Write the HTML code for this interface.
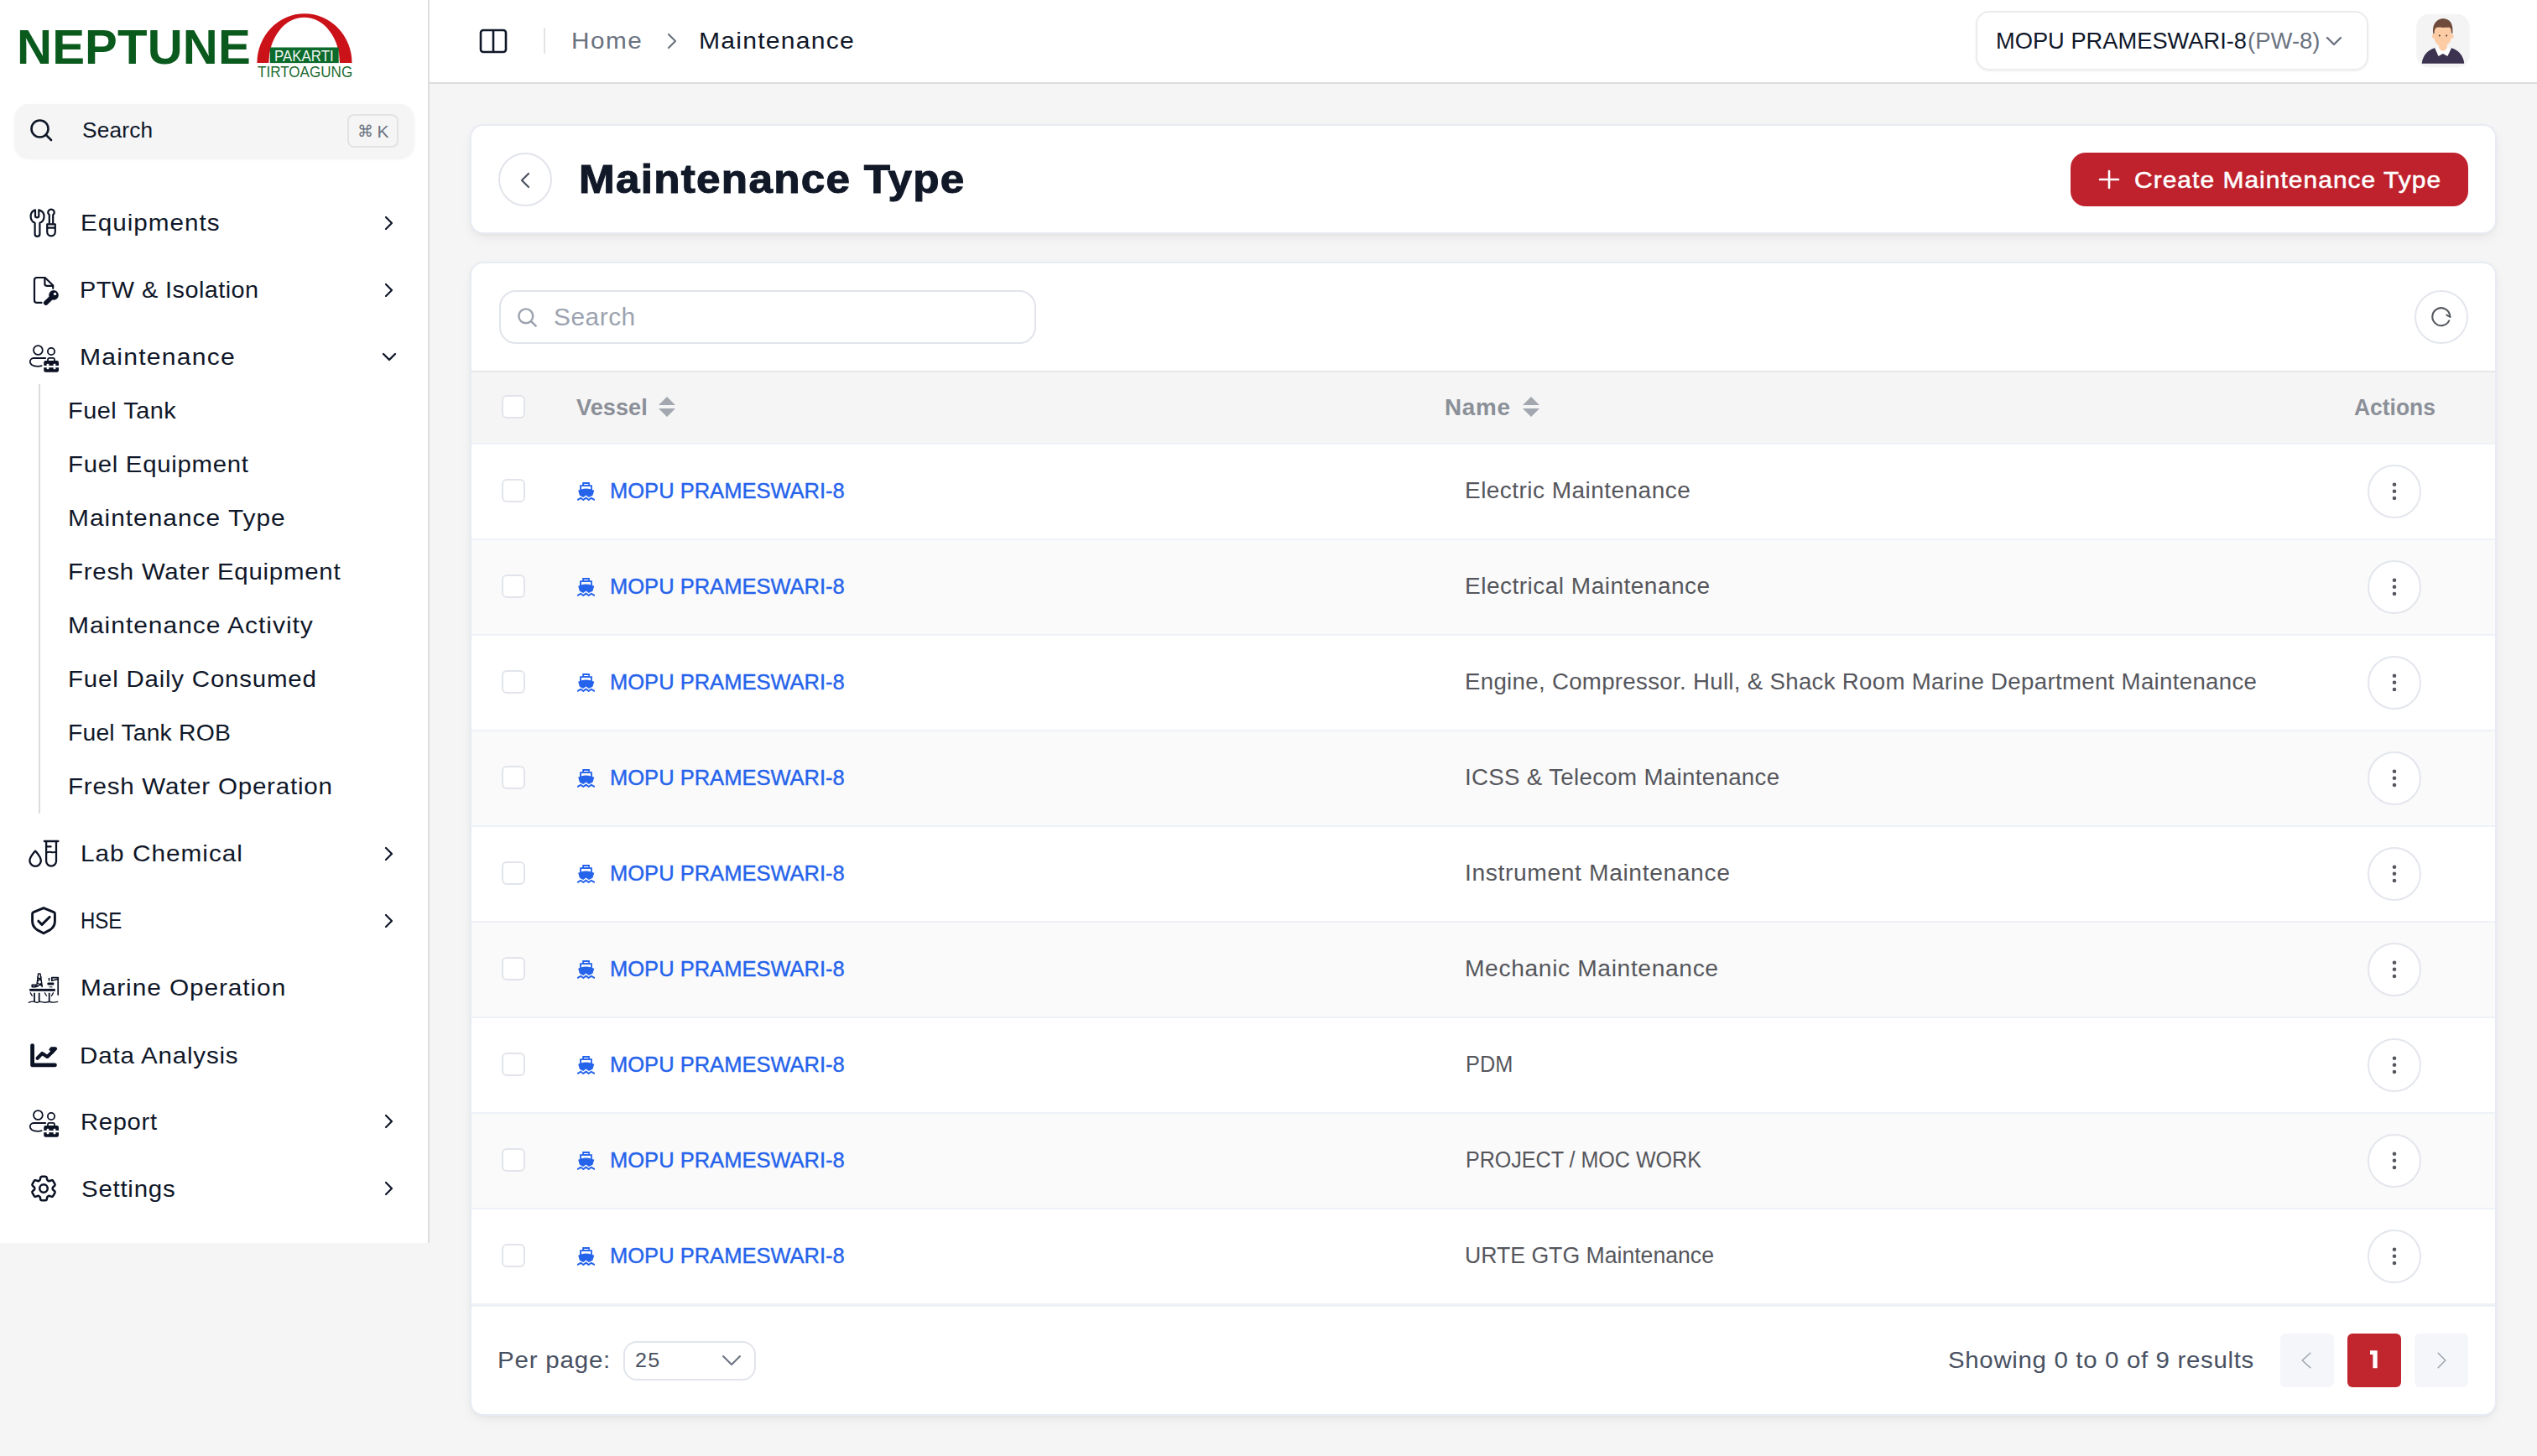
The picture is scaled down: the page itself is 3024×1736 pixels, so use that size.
<!DOCTYPE html><html><head><meta charset="utf-8"><style>
*{box-sizing:border-box;margin:0;padding:0}
html,body{width:3024px;height:1736px;overflow:hidden;background:#f5f5f5;font-family:"Liberation Sans",sans-serif;color:#0f1729}
@media (max-width:2000px){html{zoom:0.5}}
.abs{position:absolute}
.t{position:absolute;white-space:nowrap;line-height:1}
#sidebar{position:absolute;left:0;top:0;width:512px;height:1482px;background:#fff;border-right:2px solid #dedede}
#header{position:absolute;left:512px;top:0;width:2512px;height:100px;background:#fff;border-bottom:2px solid #dcdcdc}
.card{position:absolute;background:#fff;border:2px solid #e8ebf3;border-radius:16px;box-shadow:0 6px 16px -4px rgba(0,0,0,0.08),0 1px 3px rgba(0,0,0,0.04)}
.row{position:absolute;left:0;width:2412px;height:114px;border-bottom:2px solid #eef2f8}
.row.s{background:#fafafa}
.cb{position:absolute;width:28px;height:28px;border:2px solid #e1e4ea;border-radius:6px;background:#fff}
.act{position:absolute;width:64px;height:64px;border:2px solid #e3e6ec;border-radius:50%;background:#fff}
</style></head><body>
<div id="sidebar">
<div class="t" style="left:19.69px;top:27px;font-size:58px;color:#0b5a1d;letter-spacing:0.128px;transform:scaleX(1.0028);transform-origin:0 0;font-weight:bold">NEPTUNE</div>
<svg class="abs" style="left:290px;top:8px" width="140" height="90" viewBox="0 0 140 90">
<path d="M16.4 67.1 A56.55 58.8 0 0 1 129.5 67.1 L115 67.1 A42.35 54.4 0 0 0 30.3 67.1 Z" fill="#cc1219"/>
<rect x="31.8" y="48.5" width="81.9" height="18.6" fill="#0b6b2c"/>
</svg>
<div class="t" style="left:327.11px;top:57px;font-size:19px;color:#eef5ef;letter-spacing:0.000px;transform:scaleX(0.8879);transform-origin:0 0">PAKARTI</div>
<div class="t" style="left:306.70px;top:76px;font-size:19px;color:#1d6b30;letter-spacing:0.000px;transform:scaleX(0.8986);transform-origin:0 0">TIRTOAGUNG</div>
<div class="abs" style="left:18px;top:124px;width:475px;height:63px;background:#f5f5f5;border-radius:16px;box-shadow:0 2px 4px rgba(0,0,0,0.07)"></div>
<svg class="abs" style="left:35px;top:141px" width="28" height="28" viewBox="0 0 28 28" fill="none" stroke="#0f1729" stroke-width="2.6" stroke-linecap="round"><circle cx="12.5" cy="12.5" r="10"/><path d="M20 20 L26 26"/></svg>
<div class="t" style="left:98.09px;top:142px;font-size:26px;color:#0f1729;letter-spacing:0.176px;transform:scaleX(1.0111);transform-origin:0 0">Search</div>
<div class="abs" style="left:414px;top:136px;width:61px;height:40px;border:2px solid #e3e3e3;border-radius:8px"></div>
<div class="t" style="left:425.80px;top:147px;font-size:19px;color:#6b7280;letter-spacing:0.000px">&#8984;</div>
<div class="t" style="left:449.50px;top:146px;font-size:21px;color:#6b7280;letter-spacing:0.000px">K</div>
<div class="t" style="left:95.78px;top:252px;font-size:28px;color:#0f1729;letter-spacing:0.919px;transform:scaleX(1.0605);transform-origin:0 0">Equipments</div>
<svg class="abs" style="left:30px;top:245px" width="42" height="42" viewBox="0 0 42 42" fill="none" stroke="#0b1224" stroke-width="2.2" stroke-linejoin="round" stroke-linecap="round"><path d="M16.3 5.4 V12.2 A2.15 2.15 0 0 1 12 12.2 V5.4 C8.6 6.6 6.6 9.5 6.6 12.8 C6.6 16.4 8.4 19.6 11.6 20.8 V33.9 A2.9 2.9 0 0 0 17.4 33.9 V20.8 C20.8 19.6 22.55 16.4 22.55 12.8 C22.55 9.5 20.5 6.6 16.3 5.4 Z"/><path d="M28.8 21.3 V11.2 A3.7 3.7 0 1 1 33.2 11.2 V21.3"/><path d="M26.2 22.4 H35.8 V31.6 A4.8 4.8 0 0 1 26.2 31.6 Z M26.2 26.6 H35.8"/></svg>
<svg class="abs" style="left:457px;top:256px" width="14" height="20" viewBox="0 0 14 20" fill="none" stroke="#0f1729" stroke-width="2.2" stroke-linecap="round" stroke-linejoin="round"><path d="M3 3 L10 10 L3 17"/></svg>
<div class="t" style="left:95.19px;top:332px;font-size:28px;color:#0f1729;letter-spacing:0.426px;transform:scaleX(1.0312);transform-origin:0 0">PTW &amp; Isolation</div>
<svg class="abs" style="left:30px;top:325px" width="42" height="42" viewBox="0 0 42 42" fill="none" stroke="#0b1224" stroke-width="2.2" stroke-linejoin="round" stroke-linecap="round"><path d="M19.5 35.9 H14 A3 3 0 0 1 11 32.9 V9 A3 3 0 0 1 14 6 H23.6 L33.2 15.3 V18.8"/><path d="M23.4 6 V13.6 A2.2 2.2 0 0 0 25.6 15.8 H32.8"/><circle cx="34" cy="26.9" r="5.8" fill="#0b1224" stroke="none"/><circle cx="35.5" cy="25.4" r="1.7" fill="#fff" stroke="none"/><path d="M30.5 30.5 L24.6 36.2" stroke-width="5.4"/></svg>
<svg class="abs" style="left:457px;top:336px" width="14" height="20" viewBox="0 0 14 20" fill="none" stroke="#0f1729" stroke-width="2.2" stroke-linecap="round" stroke-linejoin="round"><path d="M3 3 L10 10 L3 17"/></svg>
<div class="t" style="left:95.35px;top:412px;font-size:28px;color:#0f1729;letter-spacing:1.130px;transform:scaleX(1.0772);transform-origin:0 0">Maintenance</div>
<svg class="abs" style="left:30px;top:405px" width="42" height="42" viewBox="0 0 42 42" fill="none" stroke="#0b1224" stroke-width="2.2" stroke-linejoin="round" stroke-linecap="round"><circle cx="15.4" cy="12.5" r="5.4" stroke-width="1.8"/><circle cx="31" cy="14" r="4.1" stroke-width="1.8"/><path d="M24.2 22 H10 A4.3 4.3 0 0 0 5.8 26.3 C6 29.6 9.6 31.8 15 31.8 C16.8 31.8 18.3 31.6 19.6 31.2" stroke-width="1.8"/><path d="M27 25.2 V23.5 A1.8 1.8 0 0 1 28.8 21.9 H33.2 A1.8 1.8 0 0 1 35 23.5 V25.2" stroke-width="1.8"/><path d="M24.4 25.1 H37.8 A2.2 2.2 0 0 1 40 27.3 V36.6 A2.2 2.2 0 0 1 37.8 38.8 H24.4 A2.2 2.2 0 0 1 22.2 36.6 V27.3 A2.2 2.2 0 0 1 24.4 25.1 Z" fill="#0b1224" stroke="none"/><rect x="22" y="30.9" width="18.2" height="2.3" fill="#fff" stroke="none"/><rect x="25.7" y="28.8" width="2.6" height="6.4" fill="#fff" stroke="none"/><rect x="33.7" y="28.8" width="2.6" height="6.4" fill="#fff" stroke="none"/></svg>
<svg class="abs" style="left:454px;top:419px" width="20" height="14" viewBox="0 0 20 14" fill="none" stroke="#0f1729" stroke-width="2.4" stroke-linecap="round" stroke-linejoin="round"><path d="M3 3 L10 10 L17 3"/></svg>
<div class="t" style="left:95.57px;top:1004px;font-size:28px;color:#0f1729;letter-spacing:0.919px;transform:scaleX(1.0641);transform-origin:0 0">Lab Chemical</div>
<svg class="abs" style="left:30px;top:997px" width="42" height="42" viewBox="0 0 42 42" fill="none" stroke="#0b1224" stroke-width="2.2" stroke-linejoin="round" stroke-linecap="round"><path d="M12.1 17.6 C9 21 5.4 25.5 5.4 29.2 C5.4 33 8.4 35.8 12.1 35.8 C15.8 35.8 18.8 33 18.8 29.2 C18.8 25.5 15.2 21 12.1 17.6 Z" stroke-width="2.3"/><path d="M22.8 6 H39.4 M25.1 6 V29.7 A5.95 5.95 0 0 0 37 29.7 V6" stroke-width="2.3"/><path d="M25.1 12.4 H30.6" stroke-width="2.3"/><path d="M25.1 19.6 C27.5 18.6 29.5 18.4 31 19 C32.5 19.6 34.5 19.4 37 18.6" stroke-width="2"/></svg>
<svg class="abs" style="left:457px;top:1008px" width="14" height="20" viewBox="0 0 14 20" fill="none" stroke="#0f1729" stroke-width="2.2" stroke-linecap="round" stroke-linejoin="round"><path d="M3 3 L10 10 L3 17"/></svg>
<div class="t" style="left:95.98px;top:1084px;font-size:28px;color:#0f1729;letter-spacing:0.000px;transform:scaleX(0.8580);transform-origin:0 0">HSE</div>
<svg class="abs" style="left:30px;top:1077px" width="42" height="42" viewBox="0 0 42 42" fill="none" stroke="#0b1224" stroke-width="2.2" stroke-linejoin="round" stroke-linecap="round"><path d="M22 5.7 L9.8 10.6 Q8.6 11.1 8.6 12.4 V21.5 C8.6 26 11 29.4 14.2 31.6 L22 35.8 L29.8 31.6 C33 29.4 35.4 26 35.4 21.5 V12.4 Q35.4 11.1 34.2 10.6 Z" stroke-width="2.9"/><path d="M15.8 21.2 L20 25.4 L29.2 16.3" stroke-width="3"/></svg>
<svg class="abs" style="left:457px;top:1088px" width="14" height="20" viewBox="0 0 14 20" fill="none" stroke="#0f1729" stroke-width="2.2" stroke-linecap="round" stroke-linejoin="round"><path d="M3 3 L10 10 L3 17"/></svg>
<div class="t" style="left:95.57px;top:1164px;font-size:28px;color:#0f1729;letter-spacing:0.865px;transform:scaleX(1.0650);transform-origin:0 0">Marine Operation</div>
<svg class="abs" style="left:30px;top:1157px" width="42" height="42" viewBox="0 0 42 42" fill="none" stroke="#0b1224" stroke-width="2.2" stroke-linejoin="round" stroke-linecap="round"><rect x="5.2" y="21.9" width="30.6" height="2.9" fill="#0b1224" stroke="none"/><path d="M11 26.8 V37 M16.7 26.8 V37 M28.7 26.8 V37" stroke-width="1.8" stroke-linecap="butt"/><path d="M6.3 26.8 L8.4 30.3 M23.4 26.8 L25.4 30.3 M33.5 26.8 L31.4 30.3" stroke-width="1.3"/><path d="M4.3 38.3 C7 37 9 37 11 37.2 C13 38.6 15 38.6 17 37.2 C19 37.2 22 38.6 24.5 38.2 C26.5 37.5 28 37.2 30 37.6 C33 38.6 35 38.3 38.7 37.4" stroke-width="1.4"/><path d="M13.7 19.4 L15.6 4 H18 L20.3 19.4 M14.6 8 L19 12 M19.2 8 L14.5 13.5 M14.2 14.5 L19.8 18.5 M15 19 L19.6 15" stroke-width="1.5"/><rect x="8.2" y="17.4" width="4.5" height="2.2" stroke-width="1.6"/><path d="M39.2 8.6 V29 M31.8 8.6 H39.2 M31.8 8.6 V12.2 L38.5 10.5" stroke-width="1.7"/><path d="M28.5 9.6 V12" stroke-width="1.6"/><rect x="26.4" y="14.6" width="8" height="2.8" rx="1" fill="#0b1224" stroke="none"/><path d="M29 19.8 H32" stroke-width="1"/></svg>
<div class="t" style="left:95.49px;top:1245px;font-size:28px;color:#0f1729;letter-spacing:0.746px;transform:scaleX(1.0562);transform-origin:0 0">Data Analysis</div>
<svg class="abs" style="left:30px;top:1238px" width="42" height="42" viewBox="0 0 42 42" fill="none" stroke="#0b1224" stroke-width="2.2" stroke-linejoin="round" stroke-linecap="round"><path d="M8.6 8.6 V31.8 H35.4" stroke-width="4.8"/><path d="M14.6 23.8 L20.3 17.9 L26.4 21.9 L32.5 16" stroke-width="4.2"/><path d="M28.8 13.2 L30.6 10.8 H36.4 Q38.2 11 37.6 13 L33.3 17.8 Z" fill="#0b1224" stroke-width="1"/></svg>
<div class="t" style="left:95.52px;top:1324px;font-size:28px;color:#0f1729;letter-spacing:0.666px;transform:scaleX(1.0422);transform-origin:0 0">Report</div>
<svg class="abs" style="left:30px;top:1317px" width="42" height="42" viewBox="0 0 42 42" fill="none" stroke="#0b1224" stroke-width="2.2" stroke-linejoin="round" stroke-linecap="round"><circle cx="15.4" cy="12.5" r="5.4" stroke-width="1.8"/><circle cx="31" cy="14" r="4.1" stroke-width="1.8"/><path d="M24.2 22 H10 A4.3 4.3 0 0 0 5.8 26.3 C6 29.6 9.6 31.8 15 31.8 C16.8 31.8 18.3 31.6 19.6 31.2" stroke-width="1.8"/><path d="M27 25.2 V23.5 A1.8 1.8 0 0 1 28.8 21.9 H33.2 A1.8 1.8 0 0 1 35 23.5 V25.2" stroke-width="1.8"/><path d="M24.4 25.1 H37.8 A2.2 2.2 0 0 1 40 27.3 V36.6 A2.2 2.2 0 0 1 37.8 38.8 H24.4 A2.2 2.2 0 0 1 22.2 36.6 V27.3 A2.2 2.2 0 0 1 24.4 25.1 Z" fill="#0b1224" stroke="none"/><rect x="22" y="30.9" width="18.2" height="2.3" fill="#fff" stroke="none"/><rect x="25.7" y="28.8" width="2.6" height="6.4" fill="#fff" stroke="none"/><rect x="33.7" y="28.8" width="2.6" height="6.4" fill="#fff" stroke="none"/></svg>
<svg class="abs" style="left:457px;top:1327px" width="14" height="20" viewBox="0 0 14 20" fill="none" stroke="#0f1729" stroke-width="2.2" stroke-linecap="round" stroke-linejoin="round"><path d="M3 3 L10 10 L3 17"/></svg>
<div class="t" style="left:96.55px;top:1404px;font-size:28px;color:#0f1729;letter-spacing:0.701px;transform:scaleX(1.0521);transform-origin:0 0">Settings</div>
<svg class="abs" style="left:33px;top:1398px" width="38" height="38" viewBox="0 0 24 24" fill="none" stroke="#0b1224" stroke-width="1.6" stroke-linejoin="round" stroke-linecap="round"><path d="M9.594 3.94c.09-.542.56-.94 1.110-.94h2.593c.55 0 1.02.398 1.11.94l.213 1.281c.063.374.313.686.645.87.074.04.147.083.22.127.325.196.72.257 1.075.124l1.217-.456a1.125 1.125 0 0 1 1.37.49l1.296 2.247a1.125 1.125 0 0 1-.26 1.431l-1.003.827c-.293.241-.438.613-.43.992a7.723 7.723 0 0 1 0 .255c-.008.378.137.75.43.991l1.004.827c.424.35.534.955.26 1.43l-1.298 2.247a1.125 1.125 0 0 1-1.369.491l-1.217-.456c-.355-.133-.75-.072-1.076.124a6.470 6.470 0 0 1-.22.128c-.331.183-.581.495-.644.869l-.213 1.281c-.09.543-.56.94-1.11.94h-2.594c-.55 0-1.019-.398-1.11-.94l-.213-1.281c-.062-.374-.312-.686-.644-.87a6.520 6.520 0 0 1-.22-.127c-.325-.196-.72-.257-1.076-.124l-1.217.456a1.125 1.125 0 0 1-1.369-.49l-1.297-2.247a1.125 1.125 0 0 1 .26-1.431l1.004-.827c.292-.24.437-.613.43-.991a6.932 6.932 0 0 1 0-.255c.007-.38-.138-.751-.43-.992l-1.004-.827a1.125 1.125 0 0 1-.26-1.430l1.297-2.247a1.125 1.125 0 0 1 1.370-.491l1.216.456c.356.133.751.072 1.076-.124.072-.044.146-.086.22-.128.332-.183.582-.495.644-.869l.214-1.280Z"/><path d="M15 12a3 3 0 1 1-6 0 3 3 0 0 1 6 0Z"/></svg>
<svg class="abs" style="left:457px;top:1407px" width="14" height="20" viewBox="0 0 14 20" fill="none" stroke="#0f1729" stroke-width="2.2" stroke-linecap="round" stroke-linejoin="round"><path d="M3 3 L10 10 L3 17"/></svg>
<div class="t" style="left:81.24px;top:476px;font-size:28px;color:#0f1729;letter-spacing:0.473px;transform:scaleX(1.0324);transform-origin:0 0">Fuel Tank</div>
<div class="t" style="left:81.20px;top:540px;font-size:28px;color:#0f1729;letter-spacing:0.689px;transform:scaleX(1.0483);transform-origin:0 0">Fuel Equipment</div>
<div class="t" style="left:81.17px;top:604px;font-size:28px;color:#0f1729;letter-spacing:0.945px;transform:scaleX(1.0669);transform-origin:0 0">Maintenance Type</div>
<div class="t" style="left:81.20px;top:668px;font-size:28px;color:#0f1729;letter-spacing:0.710px;transform:scaleX(1.0510);transform-origin:0 0">Fresh Water Equipment</div>
<div class="t" style="left:81.16px;top:732px;font-size:28px;color:#0f1729;letter-spacing:0.897px;transform:scaleX(1.0717);transform-origin:0 0">Maintenance Activity</div>
<div class="t" style="left:81.19px;top:796px;font-size:28px;color:#0f1729;letter-spacing:0.739px;transform:scaleX(1.0530);transform-origin:0 0">Fuel Daily Consumed</div>
<div class="t" style="left:81.28px;top:860px;font-size:28px;color:#0f1729;letter-spacing:0.182px;transform:scaleX(1.0118);transform-origin:0 0">Fuel Tank ROB</div>
<div class="t" style="left:81.19px;top:924px;font-size:28px;color:#0f1729;letter-spacing:0.733px;transform:scaleX(1.0552);transform-origin:0 0">Fresh Water Operation</div>
<div class="abs" style="left:46px;top:458px;width:2px;height:512px;background:#dcdcdc"></div>
</div>
<div id="header"></div>
<svg class="abs" style="left:570px;top:33px" width="36" height="32" viewBox="0 0 36 32" fill="none" stroke="#0f1729" stroke-width="2.6" stroke-linejoin="round">
<rect x="3" y="3" width="30" height="26" rx="3"/><path d="M18 3 V29"/></svg>
<div class="abs" style="left:648px;top:33px;width:2px;height:31px;background:#e3e3e3"></div>
<div class="t" style="left:681.18px;top:35px;font-size:28px;color:#6b7280;letter-spacing:1.409px;transform:scaleX(1.0623);transform-origin:0 0">Home</div>
<svg class="abs" style="left:793px;top:38px" width="16" height="22" viewBox="0 0 16 22" fill="none" stroke="#6b7280" stroke-width="2.2" stroke-linecap="round" stroke-linejoin="round"><path d="M4 3 L12 11 L4 19"/></svg>
<div class="t" style="left:832.55px;top:35px;font-size:28px;color:#0f1729;letter-spacing:1.130px;transform:scaleX(1.0772);transform-origin:0 0">Maintenance</div>
<div class="abs" style="left:2355px;top:13px;width:468px;height:71px;border:2px solid #ececec;border-radius:16px;background:#fff;box-shadow:0 1px 3px rgba(0,0,0,0.06)"></div>
<div class="t" style="left:2378.85px;top:35px;font-size:28px;color:#0f1729;letter-spacing:0.000px;transform:scaleX(0.9740);transform-origin:0 0">MOPU PRAMESWARI-8</div>
<div class="t" style="left:2678.62px;top:35px;font-size:28px;color:#6b7280;letter-spacing:0.000px;transform:scaleX(0.9811);transform-origin:0 0">(PW-8)</div>
<svg class="abs" style="left:2771px;top:41px" width="22" height="16" viewBox="0 0 22 16" fill="none" stroke="#6b7280" stroke-width="2.4" stroke-linecap="round" stroke-linejoin="round"><path d="M3 4 L11 12 L19 4"/></svg>
<svg class="abs" style="left:2876px;top:12px" width="74" height="74" viewBox="0 0 74 74">
<rect x="4.3" y="4.8" width="63.3" height="63.8" rx="15" fill="#f4f4f4"/>
<path d="M10.7 63.8 C11.5 54 18 47.5 26 45.2 H46 C54 47.5 60.5 54 61.2 63.8 Z" fill="#3c3350"/>
<rect x="31" y="40" width="9.9" height="12" rx="4" fill="#fdcba4"/>
<path d="M26.2 45.2 L30.5 55.1 L35.8 52.1 L41.4 55.1 L46 45.2 L40.9 44.6 C39 50 33 50 31 44.6 Z" fill="#fff"/>
<ellipse cx="24.6" cy="31.2" rx="1.6" ry="2.8" fill="#fdcba4"/><ellipse cx="47" cy="31.2" rx="1.6" ry="2.8" fill="#fdcba4"/>
<path d="M25.4 24 C25.4 18 29.5 16.8 35.6 16.8 C41.7 16.8 45.7 18 45.7 24 V32 C45.7 38.5 41 43.2 35.6 43.2 C30.2 43.2 25.4 38.5 25.4 32 Z" fill="#fdcba4"/>
<path d="M24.3 28.5 C23 20 25.5 11 35.8 9.9 C45 10.2 48.5 17 47.3 28.2 L45.8 27 C46 23 45 21.5 43.5 20.5 C40 21 37.5 20.5 35.6 21 C33 20.3 30 20.5 28 21 C26 22 25.6 25 25.6 28 Z" fill="#6e4b3a"/>
<circle cx="31.8" cy="30.5" r="0.9" fill="#3a2a25"/><circle cx="40.2" cy="30.5" r="0.9" fill="#3a2a25"/>
</svg>
<div class="card" style="left:560px;top:148px;width:2416px;height:131px"></div>
<div class="abs" style="left:594px;top:182px;width:64px;height:64px;border:2px solid #e1e4ea;border-radius:50%"></div>
<svg class="abs" style="left:616px;top:204px" width="20" height="22" viewBox="0 0 20 22" fill="none" stroke="#4b5060" stroke-width="2.2" stroke-linecap="round" stroke-linejoin="round"><path d="M14 3 L6 11 L14 19"/></svg>
<div class="t" style="left:689.76px;top:189px;font-size:49px;color:#111827;letter-spacing:1.209px;transform:scaleX(1.0455);transform-origin:0 0;font-weight:bold;-webkit-text-stroke:1.1px #111827">Maintenance Type</div>
<div class="abs" style="left:2468px;top:182px;width:474px;height:64px;border-radius:18px;background:#bf222d"></div>
<svg class="abs" style="left:2501px;top:202px" width="26" height="24" viewBox="0 0 26 24" fill="none" stroke="#fff" stroke-width="2.6" stroke-linecap="round"><path d="M13 2 V22 M2 12 H24"/></svg>
<div class="t" style="left:2543.93px;top:201px;font-size:28px;color:#fff;letter-spacing:0.954px;transform:scaleX(1.0704);transform-origin:0 0;-webkit-text-stroke:0.5px #fff">Create Maintenance Type</div>
<div class="card" style="left:560px;top:312px;width:2416px;height:1376px;overflow:hidden">
<div class="abs" style="left:33px;top:32px;width:640px;height:64px;border:2px solid #e1e4ea;border-radius:20px"></div>
<svg class="abs" style="left:53px;top:51px" width="27" height="27" viewBox="0 0 24 24" fill="none" stroke="#9ca3af" stroke-width="2.2" stroke-linecap="round"><circle cx="10.5" cy="10.5" r="7.5"/><path d="M16 16 L21 21"/></svg>
<div class="t" style="left:98.27px;top:50px;font-size:29px;color:#9ca3af;letter-spacing:0.509px;transform:scaleX(1.0292);transform-origin:0 0">Search</div>
<div class="act" style="left:2316px;top:32px"></div>
<svg class="abs" style="left:2328px;top:44px" width="40" height="40" viewBox="0 0 40 40" fill="none" stroke="#55585e" stroke-width="2.1" stroke-linecap="round" stroke-linejoin="round"><path d="M29.2 24.4 A10.5 10.5 0 1 1 30.3 19.2"/><path d="M26.4 17.6 L30.5 19.8"/></svg>
<div class="abs" style="left:0;top:128px;width:2412px;height:88px;background:#f5f5f5;border-top:2px solid #e6e7ea;border-bottom:2px solid #eef1f6"></div>
<div class="cb" style="left:36px;top:157px"></div>
<div class="t" style="left:124.80px;top:159px;font-size:27px;color:#8b8f98;letter-spacing:0.061px;transform:scaleX(1.0037);transform-origin:0 0;font-weight:bold">Vessel</div>
<svg class="abs" style="left:222px;top:158px" width="22" height="26" viewBox="0 0 22 26" fill="#a3a7b0"><path d="M11 1 L21 11 H1 Z M1 15 H21 L11 25 Z"/></svg>
<div class="t" style="left:1160.07px;top:159px;font-size:27px;color:#8b8f98;letter-spacing:0.708px;transform:scaleX(1.0302);transform-origin:0 0;font-weight:bold">Name</div>
<svg class="abs" style="left:1252px;top:158px" width="22" height="26" viewBox="0 0 22 26" fill="#a3a7b0"><path d="M11 1 L21 11 H1 Z M1 15 H21 L11 25 Z"/></svg>
<div class="t" style="left:2244.30px;top:159px;font-size:27px;color:#8b8f98;letter-spacing:0.000px;transform:scaleX(0.9786);transform-origin:0 0;font-weight:bold">Actions</div>
<div class="row" style="top:216px"></div>
<div class="cb" style="left:36px;top:257px"></div>
<svg class="abs" style="left:126px;top:261px" width="21" height="22" viewBox="0 0 21 22" fill="#2563eb">
<path fill-rule="evenodd" d="M6.2 0.1 H14.9 V4.4 H6.2 Z M8 2 V3.2 H13.3 V2 Z"/>
<path fill-rule="evenodd" d="M3.1 3.3 H17.9 V10 H3.1 Z M5 5 V9.8 H16.1 V5 Z"/>
<path d="M1.2 9.8 C4 8.9 6.5 7.8 10.5 7.6 C14.5 7.8 17 8.9 20.3 9.8 L18.4 15.8 L13.8 17.9 L10.5 15.6 L7.2 17.9 L2.9 15.8 Z"/>
<path d="M0.6 20.8 L4.2 18.8 L7.3 21 L10.5 18.6 L13.7 21 L16.8 18.8 L20.5 20.8" fill="none" stroke="#2563eb" stroke-width="2" stroke-linejoin="round" stroke-linecap="round"/></svg>
<div class="t" style="left:164.94px;top:258px;font-size:26px;color:#2563eb;letter-spacing:0.000px;transform:scaleX(0.9816);transform-origin:0 0;-webkit-text-stroke:0.4px #2563eb">MOPU PRAMESWARI-8</div>
<div class="t" style="left:1184.33px;top:258px;font-size:27px;color:#55565c;letter-spacing:0.457px;transform:scaleX(1.0363);transform-origin:0 0">Electric Maintenance</div>
<div class="act" style="left:2260px;top:240px"></div>
<svg class="abs" style="left:2288px;top:259px" width="8" height="26" viewBox="0 0 8 26" fill="#55585e"><circle cx="4" cy="4.8" r="2.3"/><circle cx="4" cy="12.8" r="2.3"/><circle cx="4" cy="21" r="2.3"/></svg>
<div class="row s" style="top:330px"></div>
<div class="cb" style="left:36px;top:371px"></div>
<svg class="abs" style="left:126px;top:375px" width="21" height="22" viewBox="0 0 21 22" fill="#2563eb">
<path fill-rule="evenodd" d="M6.2 0.1 H14.9 V4.4 H6.2 Z M8 2 V3.2 H13.3 V2 Z"/>
<path fill-rule="evenodd" d="M3.1 3.3 H17.9 V10 H3.1 Z M5 5 V9.8 H16.1 V5 Z"/>
<path d="M1.2 9.8 C4 8.9 6.5 7.8 10.5 7.6 C14.5 7.8 17 8.9 20.3 9.8 L18.4 15.8 L13.8 17.9 L10.5 15.6 L7.2 17.9 L2.9 15.8 Z"/>
<path d="M0.6 20.8 L4.2 18.8 L7.3 21 L10.5 18.6 L13.7 21 L16.8 18.8 L20.5 20.8" fill="none" stroke="#2563eb" stroke-width="2" stroke-linejoin="round" stroke-linecap="round"/></svg>
<div class="t" style="left:164.94px;top:372px;font-size:26px;color:#2563eb;letter-spacing:0.000px;transform:scaleX(0.9816);transform-origin:0 0;-webkit-text-stroke:0.4px #2563eb">MOPU PRAMESWARI-8</div>
<div class="t" style="left:1184.32px;top:372px;font-size:27px;color:#55565c;letter-spacing:0.468px;transform:scaleX(1.0379);transform-origin:0 0">Electrical Maintenance</div>
<div class="act" style="left:2260px;top:354px"></div>
<svg class="abs" style="left:2288px;top:373px" width="8" height="26" viewBox="0 0 8 26" fill="#55585e"><circle cx="4" cy="4.8" r="2.3"/><circle cx="4" cy="12.8" r="2.3"/><circle cx="4" cy="21" r="2.3"/></svg>
<div class="row" style="top:444px"></div>
<div class="cb" style="left:36px;top:485px"></div>
<svg class="abs" style="left:126px;top:489px" width="21" height="22" viewBox="0 0 21 22" fill="#2563eb">
<path fill-rule="evenodd" d="M6.2 0.1 H14.9 V4.4 H6.2 Z M8 2 V3.2 H13.3 V2 Z"/>
<path fill-rule="evenodd" d="M3.1 3.3 H17.9 V10 H3.1 Z M5 5 V9.8 H16.1 V5 Z"/>
<path d="M1.2 9.8 C4 8.9 6.5 7.8 10.5 7.6 C14.5 7.8 17 8.9 20.3 9.8 L18.4 15.8 L13.8 17.9 L10.5 15.6 L7.2 17.9 L2.9 15.8 Z"/>
<path d="M0.6 20.8 L4.2 18.8 L7.3 21 L10.5 18.6 L13.7 21 L16.8 18.8 L20.5 20.8" fill="none" stroke="#2563eb" stroke-width="2" stroke-linejoin="round" stroke-linecap="round"/></svg>
<div class="t" style="left:164.94px;top:486px;font-size:26px;color:#2563eb;letter-spacing:0.000px;transform:scaleX(0.9816);transform-origin:0 0;-webkit-text-stroke:0.4px #2563eb">MOPU PRAMESWARI-8</div>
<div class="t" style="left:1184.35px;top:486px;font-size:27px;color:#55565c;letter-spacing:0.306px;transform:scaleX(1.0233);transform-origin:0 0">Engine, Compressor. Hull, &amp; Shack Room Marine Department Maintenance</div>
<div class="act" style="left:2260px;top:468px"></div>
<svg class="abs" style="left:2288px;top:487px" width="8" height="26" viewBox="0 0 8 26" fill="#55585e"><circle cx="4" cy="4.8" r="2.3"/><circle cx="4" cy="12.8" r="2.3"/><circle cx="4" cy="21" r="2.3"/></svg>
<div class="row s" style="top:558px"></div>
<div class="cb" style="left:36px;top:599px"></div>
<svg class="abs" style="left:126px;top:603px" width="21" height="22" viewBox="0 0 21 22" fill="#2563eb">
<path fill-rule="evenodd" d="M6.2 0.1 H14.9 V4.4 H6.2 Z M8 2 V3.2 H13.3 V2 Z"/>
<path fill-rule="evenodd" d="M3.1 3.3 H17.9 V10 H3.1 Z M5 5 V9.8 H16.1 V5 Z"/>
<path d="M1.2 9.8 C4 8.9 6.5 7.8 10.5 7.6 C14.5 7.8 17 8.9 20.3 9.8 L18.4 15.8 L13.8 17.9 L10.5 15.6 L7.2 17.9 L2.9 15.8 Z"/>
<path d="M0.6 20.8 L4.2 18.8 L7.3 21 L10.5 18.6 L13.7 21 L16.8 18.8 L20.5 20.8" fill="none" stroke="#2563eb" stroke-width="2" stroke-linejoin="round" stroke-linecap="round"/></svg>
<div class="t" style="left:164.94px;top:600px;font-size:26px;color:#2563eb;letter-spacing:0.000px;transform:scaleX(0.9816);transform-origin:0 0;-webkit-text-stroke:0.4px #2563eb">MOPU PRAMESWARI-8</div>
<div class="t" style="left:1184.35px;top:600px;font-size:27px;color:#55565c;letter-spacing:0.329px;transform:scaleX(1.0237);transform-origin:0 0">ICSS &amp; Telecom Maintenance</div>
<div class="act" style="left:2260px;top:582px"></div>
<svg class="abs" style="left:2288px;top:601px" width="8" height="26" viewBox="0 0 8 26" fill="#55585e"><circle cx="4" cy="4.8" r="2.3"/><circle cx="4" cy="12.8" r="2.3"/><circle cx="4" cy="21" r="2.3"/></svg>
<div class="row" style="top:672px"></div>
<div class="cb" style="left:36px;top:713px"></div>
<svg class="abs" style="left:126px;top:717px" width="21" height="22" viewBox="0 0 21 22" fill="#2563eb">
<path fill-rule="evenodd" d="M6.2 0.1 H14.9 V4.4 H6.2 Z M8 2 V3.2 H13.3 V2 Z"/>
<path fill-rule="evenodd" d="M3.1 3.3 H17.9 V10 H3.1 Z M5 5 V9.8 H16.1 V5 Z"/>
<path d="M1.2 9.8 C4 8.9 6.5 7.8 10.5 7.6 C14.5 7.8 17 8.9 20.3 9.8 L18.4 15.8 L13.8 17.9 L10.5 15.6 L7.2 17.9 L2.9 15.8 Z"/>
<path d="M0.6 20.8 L4.2 18.8 L7.3 21 L10.5 18.6 L13.7 21 L16.8 18.8 L20.5 20.8" fill="none" stroke="#2563eb" stroke-width="2" stroke-linejoin="round" stroke-linecap="round"/></svg>
<div class="t" style="left:164.94px;top:714px;font-size:26px;color:#2563eb;letter-spacing:0.000px;transform:scaleX(0.9816);transform-origin:0 0;-webkit-text-stroke:0.4px #2563eb">MOPU PRAMESWARI-8</div>
<div class="t" style="left:1184.31px;top:714px;font-size:27px;color:#55565c;letter-spacing:0.593px;transform:scaleX(1.0455);transform-origin:0 0">Instrument Maintenance</div>
<div class="act" style="left:2260px;top:696px"></div>
<svg class="abs" style="left:2288px;top:715px" width="8" height="26" viewBox="0 0 8 26" fill="#55585e"><circle cx="4" cy="4.8" r="2.3"/><circle cx="4" cy="12.8" r="2.3"/><circle cx="4" cy="21" r="2.3"/></svg>
<div class="row s" style="top:786px"></div>
<div class="cb" style="left:36px;top:827px"></div>
<svg class="abs" style="left:126px;top:831px" width="21" height="22" viewBox="0 0 21 22" fill="#2563eb">
<path fill-rule="evenodd" d="M6.2 0.1 H14.9 V4.4 H6.2 Z M8 2 V3.2 H13.3 V2 Z"/>
<path fill-rule="evenodd" d="M3.1 3.3 H17.9 V10 H3.1 Z M5 5 V9.8 H16.1 V5 Z"/>
<path d="M1.2 9.8 C4 8.9 6.5 7.8 10.5 7.6 C14.5 7.8 17 8.9 20.3 9.8 L18.4 15.8 L13.8 17.9 L10.5 15.6 L7.2 17.9 L2.9 15.8 Z"/>
<path d="M0.6 20.8 L4.2 18.8 L7.3 21 L10.5 18.6 L13.7 21 L16.8 18.8 L20.5 20.8" fill="none" stroke="#2563eb" stroke-width="2" stroke-linejoin="round" stroke-linecap="round"/></svg>
<div class="t" style="left:164.94px;top:828px;font-size:26px;color:#2563eb;letter-spacing:0.000px;transform:scaleX(0.9816);transform-origin:0 0;-webkit-text-stroke:0.4px #2563eb">MOPU PRAMESWARI-8</div>
<div class="t" style="left:1184.31px;top:828px;font-size:27px;color:#55565c;letter-spacing:0.611px;transform:scaleX(1.0442);transform-origin:0 0">Mechanic Maintenance</div>
<div class="act" style="left:2260px;top:810px"></div>
<svg class="abs" style="left:2288px;top:829px" width="8" height="26" viewBox="0 0 8 26" fill="#55585e"><circle cx="4" cy="4.8" r="2.3"/><circle cx="4" cy="12.8" r="2.3"/><circle cx="4" cy="21" r="2.3"/></svg>
<div class="row" style="top:900px"></div>
<div class="cb" style="left:36px;top:941px"></div>
<svg class="abs" style="left:126px;top:945px" width="21" height="22" viewBox="0 0 21 22" fill="#2563eb">
<path fill-rule="evenodd" d="M6.2 0.1 H14.9 V4.4 H6.2 Z M8 2 V3.2 H13.3 V2 Z"/>
<path fill-rule="evenodd" d="M3.1 3.3 H17.9 V10 H3.1 Z M5 5 V9.8 H16.1 V5 Z"/>
<path d="M1.2 9.8 C4 8.9 6.5 7.8 10.5 7.6 C14.5 7.8 17 8.9 20.3 9.8 L18.4 15.8 L13.8 17.9 L10.5 15.6 L7.2 17.9 L2.9 15.8 Z"/>
<path d="M0.6 20.8 L4.2 18.8 L7.3 21 L10.5 18.6 L13.7 21 L16.8 18.8 L20.5 20.8" fill="none" stroke="#2563eb" stroke-width="2" stroke-linejoin="round" stroke-linecap="round"/></svg>
<div class="t" style="left:164.94px;top:942px;font-size:26px;color:#2563eb;letter-spacing:0.000px;transform:scaleX(0.9816);transform-origin:0 0;-webkit-text-stroke:0.4px #2563eb">MOPU PRAMESWARI-8</div>
<div class="t" style="left:1184.52px;top:942px;font-size:27px;color:#55565c;letter-spacing:0.000px;transform:scaleX(0.9379);transform-origin:0 0">PDM</div>
<div class="act" style="left:2260px;top:924px"></div>
<svg class="abs" style="left:2288px;top:943px" width="8" height="26" viewBox="0 0 8 26" fill="#55585e"><circle cx="4" cy="4.8" r="2.3"/><circle cx="4" cy="12.8" r="2.3"/><circle cx="4" cy="21" r="2.3"/></svg>
<div class="row s" style="top:1014px"></div>
<div class="cb" style="left:36px;top:1055px"></div>
<svg class="abs" style="left:126px;top:1059px" width="21" height="22" viewBox="0 0 21 22" fill="#2563eb">
<path fill-rule="evenodd" d="M6.2 0.1 H14.9 V4.4 H6.2 Z M8 2 V3.2 H13.3 V2 Z"/>
<path fill-rule="evenodd" d="M3.1 3.3 H17.9 V10 H3.1 Z M5 5 V9.8 H16.1 V5 Z"/>
<path d="M1.2 9.8 C4 8.9 6.5 7.8 10.5 7.6 C14.5 7.8 17 8.9 20.3 9.8 L18.4 15.8 L13.8 17.9 L10.5 15.6 L7.2 17.9 L2.9 15.8 Z"/>
<path d="M0.6 20.8 L4.2 18.8 L7.3 21 L10.5 18.6 L13.7 21 L16.8 18.8 L20.5 20.8" fill="none" stroke="#2563eb" stroke-width="2" stroke-linejoin="round" stroke-linecap="round"/></svg>
<div class="t" style="left:164.94px;top:1056px;font-size:26px;color:#2563eb;letter-spacing:0.000px;transform:scaleX(0.9816);transform-origin:0 0;-webkit-text-stroke:0.4px #2563eb">MOPU PRAMESWARI-8</div>
<div class="t" style="left:1184.54px;top:1056px;font-size:27px;color:#55565c;letter-spacing:0.000px;transform:scaleX(0.9286);transform-origin:0 0">PROJECT / MOC WORK</div>
<div class="act" style="left:2260px;top:1038px"></div>
<svg class="abs" style="left:2288px;top:1057px" width="8" height="26" viewBox="0 0 8 26" fill="#55585e"><circle cx="4" cy="4.8" r="2.3"/><circle cx="4" cy="12.8" r="2.3"/><circle cx="4" cy="21" r="2.3"/></svg>
<div class="row" style="top:1128px"></div>
<div class="cb" style="left:36px;top:1169px"></div>
<svg class="abs" style="left:126px;top:1173px" width="21" height="22" viewBox="0 0 21 22" fill="#2563eb">
<path fill-rule="evenodd" d="M6.2 0.1 H14.9 V4.4 H6.2 Z M8 2 V3.2 H13.3 V2 Z"/>
<path fill-rule="evenodd" d="M3.1 3.3 H17.9 V10 H3.1 Z M5 5 V9.8 H16.1 V5 Z"/>
<path d="M1.2 9.8 C4 8.9 6.5 7.8 10.5 7.6 C14.5 7.8 17 8.9 20.3 9.8 L18.4 15.8 L13.8 17.9 L10.5 15.6 L7.2 17.9 L2.9 15.8 Z"/>
<path d="M0.6 20.8 L4.2 18.8 L7.3 21 L10.5 18.6 L13.7 21 L16.8 18.8 L20.5 20.8" fill="none" stroke="#2563eb" stroke-width="2" stroke-linejoin="round" stroke-linecap="round"/></svg>
<div class="t" style="left:164.94px;top:1170px;font-size:26px;color:#2563eb;letter-spacing:0.000px;transform:scaleX(0.9816);transform-origin:0 0;-webkit-text-stroke:0.4px #2563eb">MOPU PRAMESWARI-8</div>
<div class="t" style="left:1184.43px;top:1170px;font-size:27px;color:#55565c;letter-spacing:0.000px;transform:scaleX(0.9863);transform-origin:0 0">URTE GTG Maintenance</div>
<div class="act" style="left:2260px;top:1152px"></div>
<svg class="abs" style="left:2288px;top:1171px" width="8" height="26" viewBox="0 0 8 26" fill="#55585e"><circle cx="4" cy="4.8" r="2.3"/><circle cx="4" cy="12.8" r="2.3"/><circle cx="4" cy="21" r="2.3"/></svg>
<div class="abs" style="left:0;top:1242px;width:2412px;height:2px;background:#eef0f4"></div>
<div class="t" style="left:30.69px;top:1294px;font-size:28px;color:#485162;letter-spacing:0.751px;transform:scaleX(1.0538);transform-origin:0 0">Per page:</div>
<div class="abs" style="left:181px;top:1285px;width:158px;height:47px;border:2px solid #e1e4ea;border-radius:16px"></div>
<div class="t" style="left:194.95px;top:1296px;font-size:24px;color:#485162;letter-spacing:1.124px;transform:scaleX(1.0464);transform-origin:0 0">25</div>
<svg class="abs" style="left:297px;top:1299px" width="26" height="18" viewBox="0 0 26 18" fill="none" stroke="#6b7280" stroke-width="2" stroke-linecap="round" stroke-linejoin="round"><path d="M3 4 L13 14 L23 4"/></svg>
<div class="t" style="left:1759.55px;top:1294px;font-size:28px;color:#485162;letter-spacing:0.624px;transform:scaleX(1.0520);transform-origin:0 0">Showing 0 to 0 of 9 results</div>
<div class="abs" style="left:2156px;top:1276px;width:64px;height:64px;border-radius:6px;background:#f5f6f9"></div>
<svg class="abs" style="left:2178px;top:1294px" width="20" height="28" viewBox="0 0 20 28" fill="none" stroke="#9ca3af" stroke-width="1.5" stroke-linecap="round" stroke-linejoin="round"><path d="M13.8 5.3 L4.2 14 L13.8 22.7"/></svg>
<div class="abs" style="left:2236px;top:1276px;width:64px;height:64px;border-radius:6px;background:#c1252e"></div>
<svg class="abs" style="left:2258px;top:1292px" width="20" height="30" viewBox="2820 1606 20 30"><path d="M2825 1610.2 H2833.7 V1631.2 H2828.4 V1614.9 H2825 Z" fill="#fff"/></svg>
<div class="abs" style="left:2316px;top:1276px;width:64px;height:64px;border-radius:6px;background:#f5f6f9"></div>
<svg class="abs" style="left:2338px;top:1294px" width="20" height="28" viewBox="0 0 20 28" fill="none" stroke="#9ca3af" stroke-width="1.5" stroke-linecap="round" stroke-linejoin="round"><path d="M6.2 5.3 L14.8 14 L6.2 22.7"/></svg>
</div>
</body></html>
